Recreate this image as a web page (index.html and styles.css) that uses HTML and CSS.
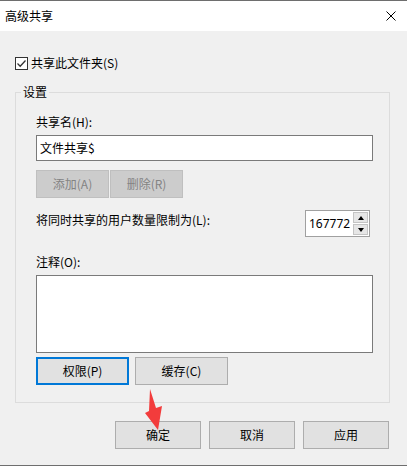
FILE: index.html
```html
<!DOCTYPE html>
<html lang="zh-CN">

<head>
    <meta charset="UTF-8">
    <meta name="viewport" content="width=device-width, initial-scale=1.0">
    <title>高级共享</title>
    <link rel="stylesheet" href="styles.css">
</head>

<body>

    <div class="window">
        <div class="titlebar">
            <span class="title">高级共享</span>
            <svg class="close-icon" width="10" height="10" viewBox="0 0 10 10">
                <path d="M0.5 0.5 L9.5 9.5 M9.5 0.5 L0.5 9.5" stroke="#000" stroke-width="1" fill="none" />
            </svg>
        </div>

        <div class="dialog-body">
            <label class="check-row">
                <span class="checkbox">
                    <svg width="11" height="11" viewBox="0 0 11 11">
                        <path d="M1.5 5.5 L4.2 8.2 L9.5 2.5" stroke="#333" stroke-width="1.3" fill="none" />
                    </svg>
                </span>
                共享此文件夹(S)
            </label>

            <fieldset class="group">
                <legend>设置</legend>

                <div class="field-label">共享名(H):</div>
                <div class="text-input">文件共享$</div>

                <div class="btn-row small-gap">
                    <button class="btn disabled">添加(A)</button>
                    <button class="btn disabled">删除(R)</button>
                </div>

                <div class="limit-row">
                    <span class="limit-label">将同时共享的用户数量限制为(L):</span>
                    <div class="spinner">
                        <span class="spinner-value">167772</span>
                        <div class="spinner-buttons">
                            <span class="spin-btn"><i class="arrow-up"></i></span>
                            <span class="spin-btn"><i class="arrow-down"></i></span>
                        </div>
                    </div>
                </div>

                <div class="field-label comment-label">注释(O):</div>
                <div class="text-area"></div>

                <div class="btn-row">
                    <button class="btn focused">权限(P)</button>
                    <button class="btn">缓存(C)</button>
                </div>
            </fieldset>

            <div class="footer">
                <button class="btn footer-btn">确定</button>
                <button class="btn footer-btn">取消</button>
                <button class="btn footer-btn">应用</button>
            </div>
        </div>

        <!-- red pointer arrow drawn over the dialog -->
        <svg class="pointer-arrow" width="407" height="468" viewBox="0 0 407 468">
            <polygon points="150,389 156,408 162,406 158,430 145,413 149,411" fill="#f23c3c" />
        </svg>
    </div>

</body>

</html>
```

FILE: styles.css
```css
/* --- Page --- */
body {
    margin: 0;
    font-family: "Noto Sans CJK SC", "Noto Sans", sans-serif;
    font-size: 12px;
    line-height: 16px;
    color: #000;
    background: #fff;
}

.window {
    position: relative;
    width: 407px;
    height: 468px;
    background: #ffffff;
    border-top: 1px solid #6e6e6e;
    box-sizing: border-box;
}

/* --- Title bar --- */
.titlebar {
    height: 30px;
    display: flex;
    align-items: center;
    justify-content: space-between;
    padding: 0 11px 0 5px;
}

.close-icon {
    display: block;
}

/* --- Gray dialog area --- */
.dialog-body {
    background: #f0f0f0;
    padding: 24px 18px 16px 15px;
    border-bottom: 1px solid #6e6e6e;
}

.check-row {
    display: flex;
    align-items: center;
    height: 16px;
    margin-bottom: 13px;
}

.checkbox {
    width: 11px;
    height: 11px;
    border: 1px solid #333;
    background: #fff;
    margin-right: 3px;
    display: flex;
}

/* --- Group box --- */
.group {
    margin: 0;
    width: 375px;
    box-sizing: border-box;
    border: 1px solid #dcdcdc;
    padding: 14px 16px 17px 20px;
}

.group legend {
    padding: 0 2px;
    margin-left: -15px;
    line-height: 16px;
}

.field-label {
    height: 16px;
    margin-bottom: 5px;
}

.text-input {
    height: 26px;
    border: 1px solid #7a7a7a;
    background: #fff;
    box-sizing: border-box;
    padding: 0 3px;
    line-height: 24px;
}

.btn-row {
    display: flex;
    gap: 6px;
    margin-top: 4px;
}

.btn-row.small-gap {
    gap: 1px;
    margin-top: 9px;
}

.btn {
    font: inherit;
    height: 28px;
    margin: 0;
    padding: 0;
    border: 1px solid #adadad;
    background: #e1e1e1;
    color: #000;
}

.btn-row .btn {
    width: 93px;
}

.btn-row.small-gap .btn {
    width: 73px;
}

.btn.disabled {
    background: #cccccc;
    border-color: #bfbfbf;
    color: #838383;
}

.btn.focused {
    border: 2px solid #0078d7;
}

/* --- User limit row --- */
.limit-row {
    display: flex;
    justify-content: space-between;
    align-items: flex-start;
    margin-top: 12px;
    padding-right: 3px;
}

.limit-label {
    margin-top: 2px;
}

.spinner {
    display: flex;
    width: 65px;
    height: 27px;
    border: 1px solid #a0a0a0;
    background: #fff;
    box-sizing: border-box;
}

.spinner-value {
    flex: 1;
    padding-left: 3px;
    line-height: 25px;
    font-family: "Noto Sans", sans-serif;
}

.spinner-buttons {
    display: flex;
    flex-direction: column;
    width: 16px;
    padding: 1px 1px 1px 0;
    box-sizing: border-box;
    gap: 1px;
}

.spin-btn {
    flex: 1;
    background: #e6e6e6;
    border: 1px solid #c4c4c4;
    display: flex;
    align-items: center;
    justify-content: center;
}

.arrow-up {
    border-left: 3px solid transparent;
    border-right: 3px solid transparent;
    border-bottom: 4px solid #000;
}

.arrow-down {
    border-left: 3px solid transparent;
    border-right: 3px solid transparent;
    border-top: 4px solid #000;
}

/* --- Comment --- */
.comment-label {
    margin-top: 17px;
}

.text-area {
    height: 78px;
    border: 1px solid #7a7a7a;
    background: #fff;
    box-sizing: border-box;
}

/* --- Footer buttons --- */
.footer {
    display: flex;
    justify-content: flex-end;
    gap: 8px;
    margin-top: 18px;
}

.footer-btn {
    width: 86px;
}

/* --- Pointer overlay --- */
.pointer-arrow {
    position: absolute;
    left: 0;
    top: -1px;
    pointer-events: none;
}
```
